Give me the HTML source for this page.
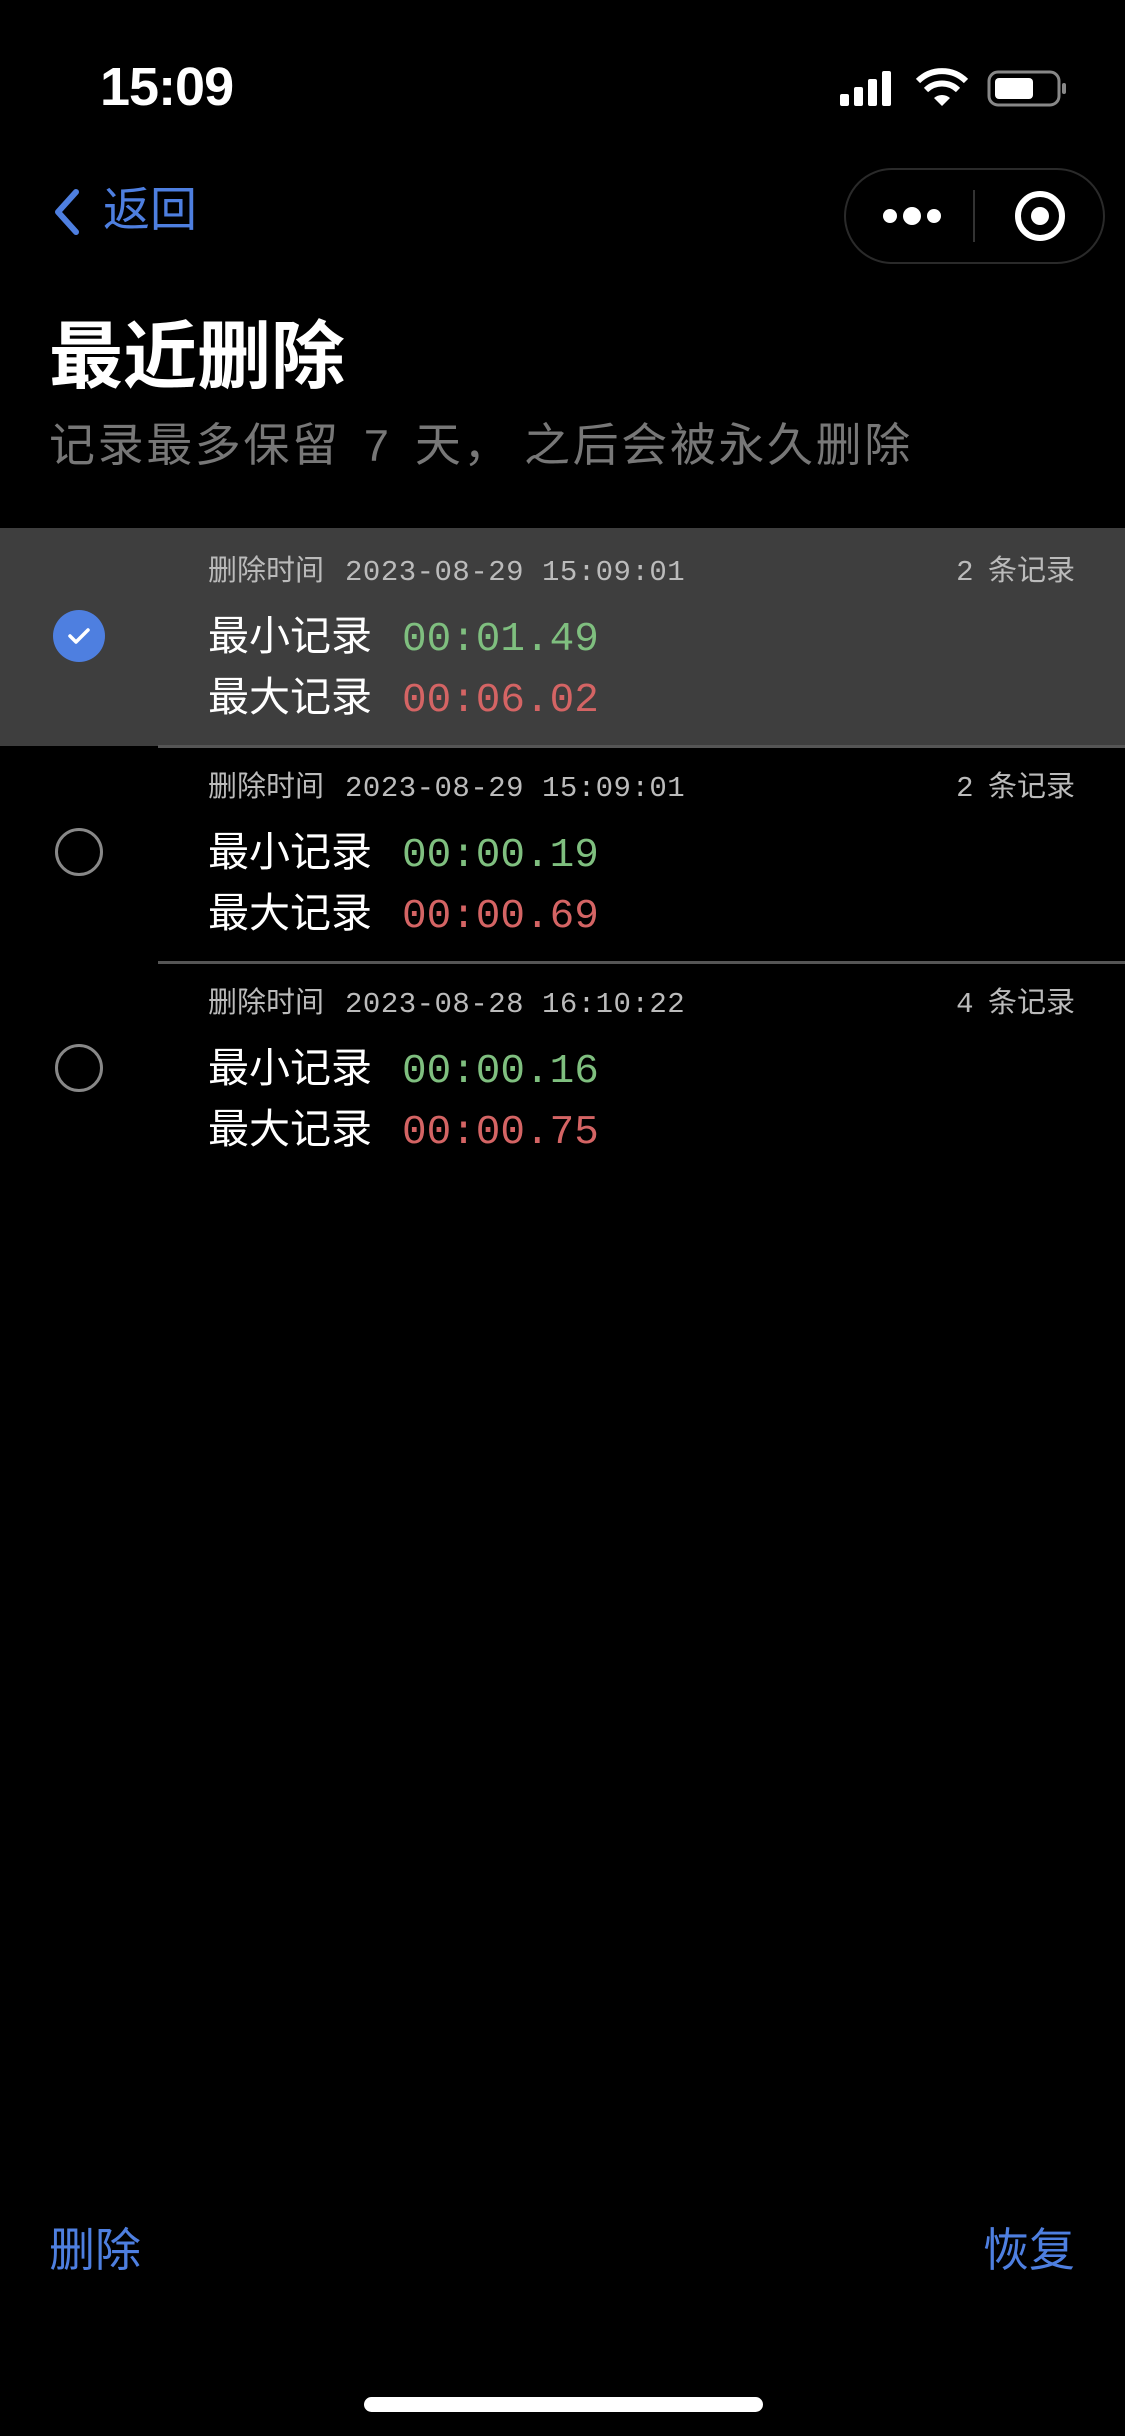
<!DOCTYPE html>
<html><head><meta charset="utf-8"><style>
*{margin:0;padding:0;box-sizing:border-box}
body{width:1125px;height:2436px;background:#000;position:relative;overflow:hidden;font-family:"Liberation Sans","Noto Sans CJK SC",sans-serif;color:#fff}
.a{position:absolute;white-space:nowrap;line-height:1}
.mono{font-family:"Liberation Mono","DejaVu Sans Mono",monospace}
.sm{font-size:29px;color:#bbb}
.sm .mono{margin-left:21px;letter-spacing:0.5px}
.cnt .mono{margin-right:14px}
.big{font-size:41px;color:#fff}
.big .mono{margin-left:30px}
.g{color:#7fbf7f}.r{color:#d46464}
.circ{position:absolute;width:48px;height:48px;border-radius:50%;border:3px solid #888}
</style></head><body>
<div class="a" style="left:100px;top:60px;font-size:54px;font-weight:bold;letter-spacing:-1px">15:09</div>
<svg class="a" style="left:838px;top:68px" width="232" height="42" viewBox="0 0 232 42">
<rect x="2" y="26" width="9" height="12" rx="2" fill="#fff"/><rect x="16" y="19" width="9" height="19" rx="2" fill="#fff"/><rect x="30" y="11" width="9" height="27" rx="2" fill="#fff"/><rect x="44" y="3" width="9" height="35" rx="2" fill="#fff"/>
<path d="M104 38 L96 30 A12 12 0 0 1 112 30 Z" fill="#fff"/>
<path d="M88 22 A23 23 0 0 1 120 22" stroke="#fff" stroke-width="6" fill="none"/>
<path d="M80 13 A34 34 0 0 1 128 13" stroke="#fff" stroke-width="6" fill="none"/>
<rect x="151" y="4" width="70" height="33" rx="9" stroke="#888" stroke-width="3" fill="none"/>
<rect x="157" y="10" width="38" height="21" rx="4" fill="#fff"/>
<rect x="224" y="15" width="4" height="11" rx="2" fill="#888"/>
</svg>
<svg class="a" style="left:52px;top:188px" width="32" height="48" viewBox="0 0 32 48"><path d="M24 4 L6 24 L24 44" stroke="#4e7fe0" stroke-width="6" fill="none" stroke-linejoin="round" stroke-linecap="round"/></svg>
<div class="a" style="left:103px;top:186px;font-size:47px;color:#4e7fe0">返回</div>
<div class="a" style="left:844px;top:168px;width:261px;height:96px;border:2px solid #2a2a2a;border-radius:48px"></div>
<div class="a" style="left:973px;top:190px;width:2px;height:52px;background:#333"></div>
<svg class="a" style="left:880px;top:202px" width="64" height="28"><circle cx="10" cy="14" r="7" fill="#fff"/><circle cx="32" cy="14" r="9" fill="#fff"/><circle cx="54" cy="14" r="7" fill="#fff"/></svg>
<svg class="a" style="left:1012px;top:188px" width="56" height="56"><circle cx="28" cy="28" r="22" stroke="#fff" stroke-width="6" fill="none"/><circle cx="28" cy="28" r="9" fill="#fff"/></svg>
<div class="a" style="left:49px;top:320px;font-size:74px;font-weight:bold">最近删除</div>
<div class="a" style="left:49px;top:422px;font-size:46px;color:#777;letter-spacing:2.6px">记录最多保留<span class="mono" style="margin:0 22px">7</span>天，<span style="margin-left:12px">之后会被永久删除</span></div>

<div class="a" style="left:0;top:528px;width:1125px;height:218px;background:#3e3e3e"></div>
<div class="a" style="left:158px;top:745px;width:967px;height:3px;background:#555"></div>
<div class="a" style="left:158px;top:961px;width:967px;height:3px;background:#555"></div>

<div class="a" style="left:53px;top:610px;width:52px;height:52px;border-radius:50%;background:#4e7fe0"></div>
<svg class="a" style="left:53px;top:610px" width="52" height="52"><path d="M17 26 L23 32 L35 20" stroke="#fff" stroke-width="3.5" fill="none" stroke-linecap="round" stroke-linejoin="round"/></svg>
<div class="circ" style="left:55px;top:828px"></div>
<div class="circ" style="left:55px;top:1044px"></div>

<div class="a sm" style="left:208px;top:557px">删除时间<span class="mono">2023-08-29 15:09:01</span></div>
<div class="a sm cnt" style="right:50px;top:557px"><span class="mono">2</span>条记录</div>
<div class="a big" style="left:208px;top:616px">最小记录<span class="mono g">00:01.49</span></div>
<div class="a big" style="left:208px;top:677px">最大记录<span class="mono r">00:06.02</span></div>

<div class="a sm" style="left:208px;top:773px">删除时间<span class="mono">2023-08-29 15:09:01</span></div>
<div class="a sm cnt" style="right:50px;top:773px"><span class="mono">2</span>条记录</div>
<div class="a big" style="left:208px;top:832px">最小记录<span class="mono g">00:00.19</span></div>
<div class="a big" style="left:208px;top:893px">最大记录<span class="mono r">00:00.69</span></div>

<div class="a sm" style="left:208px;top:989px">删除时间<span class="mono">2023-08-28 16:10:22</span></div>
<div class="a sm cnt" style="right:50px;top:989px"><span class="mono">4</span>条记录</div>
<div class="a big" style="left:208px;top:1048px">最小记录<span class="mono g">00:00.16</span></div>
<div class="a big" style="left:208px;top:1109px">最大记录<span class="mono r">00:00.75</span></div>

<div class="a" style="left:49px;top:2227px;font-size:46px;color:#4e7fe0">删除</div>
<div class="a" style="right:50px;top:2227px;font-size:46px;color:#4e7fe0">恢复</div>
<div class="a" style="left:364px;top:2397px;width:399px;height:15px;border-radius:8px;background:#fff"></div>
</body></html>
